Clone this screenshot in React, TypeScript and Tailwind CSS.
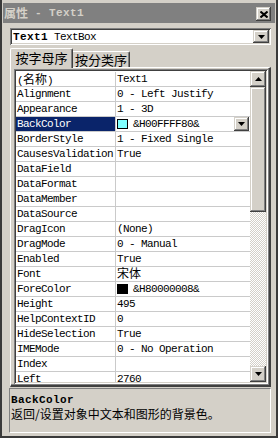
import React from 'react';

type Row = { name: string; value: string; swatch?: string; selected?: boolean };

const rows: Row[] = [
  { name: '(名称)', value: 'Text1' },
  { name: 'Alignment', value: '0 - Left Justify' },
  { name: 'Appearance', value: '1 - 3D' },
  { name: 'BackColor', value: '&H00FFFF80&', swatch: 'bg-[#80ffff]', selected: true },
  { name: 'BorderStyle', value: '1 - Fixed Single' },
  { name: 'CausesValidation', value: 'True' },
  { name: 'DataField', value: '' },
  { name: 'DataFormat', value: '' },
  { name: 'DataMember', value: '' },
  { name: 'DataSource', value: '' },
  { name: 'DragIcon', value: '(None)' },
  { name: 'DragMode', value: '0 - Manual' },
  { name: 'Enabled', value: 'True' },
  { name: 'Font', value: '宋体' },
  { name: 'ForeColor', value: '&H80000008&', swatch: 'bg-black' },
  { name: 'Height', value: '495' },
  { name: 'HelpContextID', value: '0' },
  { name: 'HideSelection', value: 'True' },
  { name: 'IMEMode', value: '0 - No Operation' },
  { name: 'Index', value: '' },
  { name: 'Left', value: '2760' },
];

const mono = "font-['Liberation_Mono','Noto_Sans_CJK_SC',monospace] text-[11px] tracking-[-0.6px] leading-[14px]";
const monoBold = "font-['Liberation_Mono','Noto_Sans_CJK_SC',monospace] text-[11px] font-bold tracking-[0.4px] leading-[14px]";
const cjk = "font-['Noto_Sans_CJK_SC',sans-serif] text-[12px] tracking-normal leading-[14px]";
const raised = 'bg-[#d4d0c8] shadow-[inset_-1px_-1px_#404040,inset_1px_1px_#d4d0c8,inset_-2px_-2px_#808080,inset_2px_2px_#ffffff]';
const sunken = 'shadow-[inset_1px_1px_#808080,inset_-1px_-1px_#ffffff,inset_2px_2px_#404040,inset_-2px_-2px_#d4d0c8]';

function Mixed({ text }: { text: string }) {
  const parts = text.split(/([\u3000-\u9fff\uff00-\uffef]+)/);
  return (
    <>
      {parts.map((p, i) =>
        /[\u3000-\u9fff\uff00-\uffef]/.test(p) ? (
          <span key={i} className={cjk}>{p}</span>
        ) : (
          <React.Fragment key={i}>{p}</React.Fragment>
        )
      )}
    </>
  );
}

function Arrow({ up }: { up?: boolean }) {
  return (
    <svg width="7" height="4" viewBox="0 0 7 4">
      <path d={up ? 'M3.5 0 L7 4 L0 4 Z' : 'M0 0 L7 0 L3.5 4 Z'} fill="#000" />
    </svg>
  );
}

export default function App() {
  return (
    <div className="w-[278px] h-[438px] bg-[#d4d0c8] border-l-2 border-r-2 border-b-2 border-[#3a3a3a] flex flex-col pt-[3px] overflow-hidden">
      {/* caption */}
      <div className="h-[20px] mx-[1px] bg-[#808080] flex items-center pl-[1px] pr-[4px]">
        <span className={`${cjk} font-bold tracking-[1px] text-[#d4d0c8]`}>属性</span>
        <span className={`${monoBold} text-[#d4d0c8] whitespace-pre`}> - Text1</span>
        <div className={`ml-auto mt-[2px] w-[15px] h-[14px] flex items-center justify-center ${raised}`}>
          <svg width="8" height="7" viewBox="0 0 8 7">
            <path d="M0.5 0.5 L7.5 6.5 M7.5 0.5 L0.5 6.5" stroke="#000" strokeWidth="2" />
          </svg>
        </div>
      </div>

      {/* object combo */}
      <div className={`mt-[5px] ml-[8px] mr-[5px] h-[17px] bg-white flex items-center pl-[3px] pr-[2px] ${sunken}`}>
        <span className={`${monoBold} text-black`}>Text1</span>
        <span className={`${mono} text-black whitespace-pre`}> TextBox</span>
        <div className={`ml-auto w-[16px] h-[13px] flex items-center justify-center ${raised}`}>
          <Arrow />
        </div>
      </div>

      {/* tabs */}
      <div className="mt-[3px] ml-[8px] mr-[5px] h-[19px] flex items-start">
        <div className="relative z-10 w-[63px] h-[20px] bg-[#d4d0c8] border-t border-l border-white border-r border-r-[#404040] rounded-t-[2px] shadow-[inset_-1px_0_#808080] flex items-start justify-center pt-[2px]">
          <span className={`${cjk} text-[13px] tracking-[0px] text-black`}>按字母序</span>
        </div>
        <div className="mt-[3px] w-[57px] h-[16px] bg-[#d4d0c8] border-t border-white border-r border-r-[#404040] rounded-tr-[2px] shadow-[inset_-1px_0_#808080] flex items-start justify-center pt-[1px]">
          <span className={`${cjk} text-[13px] tracking-[-0.5px] text-black`}>按分类序</span>
        </div>
      </div>

      {/* tab page */}
      <div className="ml-[8px] mr-[5px] h-[320px] border-t border-l border-white border-r-2 border-b-2 border-r-[#404040] border-b-[#404040] shadow-[inset_-1px_-1px_#808080] pt-[1px] pl-[3px] pr-[1px]">
        <div className={`w-[254px] h-[315px] bg-white p-[2px] ${sunken}`}>
          <div className="h-[311px] flex overflow-hidden">
            <div className="w-[234px] flex flex-col pt-[1px]">
              {rows.map((r) => (
                <div key={r.name} className="h-[15px] shrink-0 flex border-b border-[#cacaca]">
                  <div
                    className={`w-[100px] shrink-0 border-r border-[#cacaca] pl-[1px] whitespace-nowrap ${mono} ${
                      r.selected ? 'bg-[#0a246a] text-white' : 'text-black'
                    }`}
                  >
                    <Mixed text={r.name} />
                  </div>
                  <div className={`flex-1 flex items-center pl-[1px] whitespace-nowrap ${mono} text-black`}>
                    {r.swatch && <span className={`w-[11px] h-[10px] border border-black shrink-0 mr-[5px] ${r.swatch}`} />}
                    <span className="leading-[14px]">
                      <Mixed text={r.value} />
                    </span>
                    {r.selected && (
                      <div className={`ml-auto mr-[1px] w-[15px] h-[14px] flex items-center justify-center ${raised}`}>
                        <Arrow />
                      </div>
                    )}
                  </div>
                </div>
              ))}
            </div>
            {/* scrollbar */}
            <div className="w-[16px] flex flex-col">
              <div className={`h-[16px] flex items-center justify-center ${raised}`}>
                <Arrow up />
              </div>
              <div className={`h-[125px] ${raised}`} />
              <div className="flex-1 bg-[image:repeating-conic-gradient(#d4d0c8_0_25%,#ffffff_0_50%)] bg-[length:2px_2px]" />
              <div className={`h-[16px] flex items-center justify-center ${raised}`}>
                <Arrow />
              </div>
            </div>
          </div>
        </div>
      </div>

      {/* description */}
      <div className="mt-[1px] ml-[7px] mr-[5px] h-[45px] border-t border-l border-[#808080] border-b border-r border-b-white border-r-white pl-[1px] pt-[4px] text-black">
        <div className={monoBold}>BackColor</div>
        <div className={cjk}>返回/设置对象中文本和图形的背景色。</div>
      </div>
    </div>
  );
}
